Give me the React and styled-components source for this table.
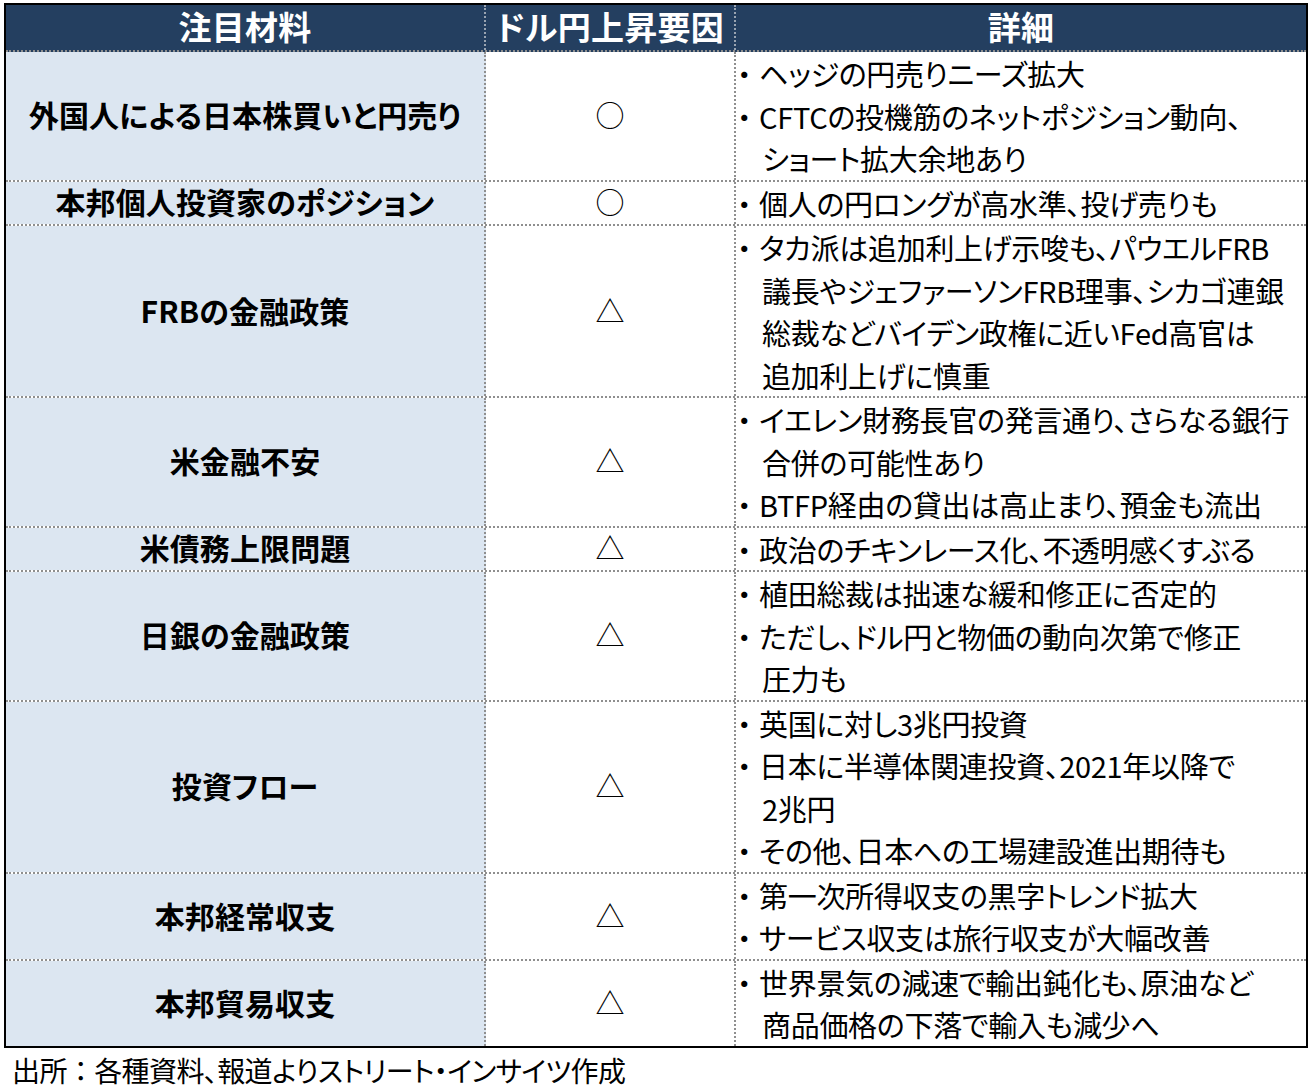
import React from "react";
import styled, { createGlobalStyle } from "styled-components";

const Global = createGlobalStyle`
  html, body { margin: 0; padding: 0; background: #ffffff; }
  body {
    font-family: "Noto Sans CJK JP", "Noto Sans", sans-serif;
    font-feature-settings: "palt";
    color: #000;
  }
`;

const Page = styled.div`
  padding: 3px 0 0 4px;
  width: 1304px;
`;

const Table = styled.div`
  border: 2px solid #000;
  display: flex;
  flex-direction: column;
`;

const cols = "480px 250px 1fr";

const HeaderRow = styled.div`
  display: grid;
  grid-template-columns: ${cols};
  background: #243f60;
  height: 45px;
  border-bottom: 2px dotted #8f8f8f;
`;

const HeaderCell = styled.div`
  display: flex;
  align-items: center;
  justify-content: center;
  padding-bottom: 2px;
  color: #fff;
  font-weight: 700;
  font-size: 33px;
  line-height: 1;
  letter-spacing: 0.3px;
  border-right: ${(p) => (p.$last ? "none" : "2px dotted #9aa4b1")};
`;

const Row = styled.div`
  display: grid;
  grid-template-columns: ${cols};
  border-bottom: ${(p) => (p.$last ? "none" : "2px dotted #8f8f8f")};
`;

const TopicCell = styled.div`
  background: #dce6f1;
  display: flex;
  align-items: center;
  justify-content: center;
  padding-bottom: 3px;
  font-weight: 700;
  font-size: 30px;
  line-height: 1;
  letter-spacing: 0.1px;
  border-right: 2px dotted #8f8f8f;
  white-space: nowrap;
`;

const MarkCell = styled.div`
  display: flex;
  align-items: center;
  justify-content: center;
  padding-bottom: 2px;
  font-size: 29px;
  line-height: 1;
  border-right: 2px dotted #8f8f8f;
  font-feature-settings: normal;
`;

const DetailCell = styled.div`
  padding-left: 5px;
  font-size: 29px;
  line-height: 42.5px;
  white-space: nowrap;
  letter-spacing: -0.3px;
`;

const Item = styled.div`
  display: flex;
`;

const Bullet = styled.span`
  flex: 0 0 18px;
  display: inline-block;
  text-align: left;
  text-indent: -4px;
`;

const Lines = styled.div`
  display: flex;
  flex-direction: column;
  & > span + span {
    padding-left: 3px;
  }
`;

const Footer = styled.div`
  font-size: 28px;
  line-height: 44px;
  padding-left: 8px;
  white-space: nowrap;
  letter-spacing: -0.6px;
`;

const WideColon = styled.span`
  font-feature-settings: normal;
`;

const rows = [
  {
    topic: "外国人による日本株買いと円売り",
    mark: "○",
    items: [
      ["ヘッジの円売りニーズ拡大"],
      ["CFTCの投機筋のネットポジション動向、", "ショート拡大余地あり"],
    ],
  },
  {
    topic: "本邦個人投資家のポジション",
    mark: "○",
    items: [["個人の円ロングが高水準、投げ売りも"]],
  },
  {
    topic: "FRBの金融政策",
    mark: "△",
    items: [
      [
        "タカ派は追加利上げ示唆も、パウエルFRB",
        "議長やジェファーソンFRB理事、シカゴ連銀",
        "総裁などバイデン政権に近いFed高官は",
        "追加利上げに慎重",
      ],
    ],
  },
  {
    topic: "米金融不安",
    mark: "△",
    items: [
      ["イエレン財務長官の発言通り、さらなる銀行", "合併の可能性あり"],
      ["BTFP経由の貸出は高止まり、預金も流出"],
    ],
  },
  {
    topic: "米債務上限問題",
    mark: "△",
    items: [["政治のチキンレース化、不透明感くすぶる"]],
  },
  {
    topic: "日銀の金融政策",
    mark: "△",
    items: [
      ["植田総裁は拙速な緩和修正に否定的"],
      ["ただし、ドル円と物価の動向次第で修正", "圧力も"],
    ],
  },
  {
    topic: "投資フロー",
    mark: "△",
    items: [
      ["英国に対し3兆円投資"],
      ["日本に半導体関連投資、2021年以降で", "2兆円"],
      ["その他、日本への工場建設進出期待も"],
    ],
  },
  {
    topic: "本邦経常収支",
    mark: "△",
    items: [
      ["第一次所得収支の黒字トレンド拡大"],
      ["サービス収支は旅行収支が大幅改善"],
    ],
  },
  {
    topic: "本邦貿易収支",
    mark: "△",
    items: [["世界景気の減速で輸出鈍化も、原油など", "商品価格の下落で輸入も減少へ"]],
  },
];

export default function App() {
  return (
    <>
      <Global />
      <Page>
        <Table>
          <HeaderRow>
            <HeaderCell>注目材料</HeaderCell>
            <HeaderCell>ドル円上昇要因</HeaderCell>
            <HeaderCell $last>詳細</HeaderCell>
          </HeaderRow>
          {rows.map((r, i) => (
            <Row key={r.topic} $last={i === rows.length - 1}>
              <TopicCell>{r.topic}</TopicCell>
              <MarkCell>{r.mark}</MarkCell>
              <DetailCell>
                {r.items.map((lines, j) => (
                  <Item key={j}>
                    <Bullet>・</Bullet>
                    <Lines>
                      {lines.map((l, k) => (
                        <span key={k}>{l}</span>
                      ))}
                    </Lines>
                  </Item>
                ))}
              </DetailCell>
            </Row>
          ))}
        </Table>
        <Footer>
          出所<WideColon>：</WideColon>各種資料、報道よりストリート・インサイツ作成
        </Footer>
      </Page>
    </>
  );
}
